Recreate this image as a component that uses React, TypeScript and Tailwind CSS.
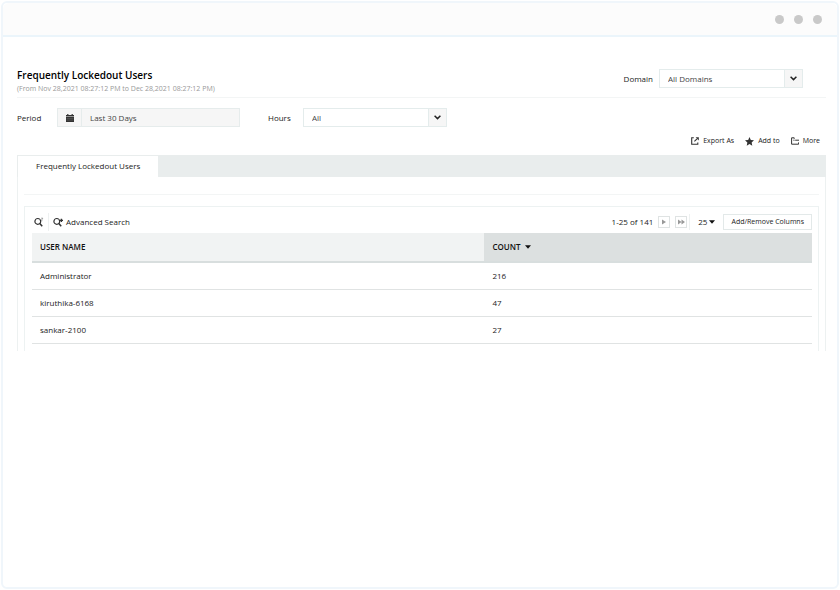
import type { ReactNode } from "react";

type User = { name: string; count: number };

const USERS: User[] = [
  { name: "Administrator", count: 216 },
  { name: "kiruthika-6168", count: 47 },
  { name: "sankar-2100", count: 27 },
];

function SelectBox({ id, value }: { id: string; value: string }) {
  return (
    <div className="relative w-36">
      <select
        id={id}
        defaultValue={value}
        className="block h-[19px] w-full appearance-none border border-[#e4ecec] bg-white pl-2 text-[8px] text-[#444] outline-none"
      >
        <option>{value}</option>
      </select>
      <span className="pointer-events-none absolute inset-y-0 right-0 flex w-[19px] items-center justify-center border border-[#e4ecec] bg-[#f6f6f6]">
        <svg width="7" height="5" viewBox="0 0 7 5" fill="none" stroke="#222" strokeWidth="1.5">
          <path d="M.6.8 3.5 3.6 6.4.8" />
        </svg>
      </span>
    </div>
  );
}

function ActionButton({ label, icon }: { label: string; icon: ReactNode }) {
  return (
    <button className="flex items-center gap-1 text-[7px] text-[#222]">
      {icon}
      {label}
    </button>
  );
}

function ExportIcon() {
  return (
    <svg width="8" height="8" viewBox="0 0 8 8" fill="none" stroke="#333" strokeWidth="1.1">
      <path d="M2.8.8H.7v6.5h6.1V5.6" />
      <path d="M3.4 4.4 6 1.9" />
      <path d="M4.6.3h3.2v3.2z" fill="#333" stroke="none" />
    </svg>
  );
}

function StarIcon() {
  return (
    <svg width="9" height="9" viewBox="0 0 24 24" fill="#333">
      <path d="m12 0 3.5 7.8 8.5 1-6.3 5.8 1.7 8.4L12 18.8 4.6 23l1.7-8.4L0 8.8l8.5-1z" />
    </svg>
  );
}

function MoreIcon() {
  return (
    <svg width="8" height="8" viewBox="0 0 8 8" fill="none" stroke="#333">
      <path d="M3.2.8H.6v6.4h7V5.4" />
      <path d="M2.4 3.2h1.1M4.2 3.2H8M3.2.8v1" />
    </svg>
  );
}

function SearchIcon({ advanced = false }: { advanced?: boolean }) {
  return (
    <svg width="10" height="10" viewBox="0 0 10 10" fill="none" stroke="#333">
      <circle cx="3.8" cy="4.4" r="2.9" strokeWidth="1.2" />
      <path d="m5.6 6.2 2.6 3" strokeWidth="1.5" />
      {advanced ? (
        <path d="M8.4 1.8v3.2M6.8 3.4H10" strokeWidth="1.4" />
      ) : (
        <path d="M7.2 1.2h1.6L7.8 2.8v1.4" stroke="#888" strokeWidth=".8" />
      )}
    </svg>
  );
}

function CaretDown() {
  return (
    <svg width="6" height="4" viewBox="0 0 6 4" fill="#111">
      <path d="M0 .2h6L3 3.8z" />
    </svg>
  );
}

export default function App() {
  return (
    <div className="flex min-h-screen bg-white p-px font-['Open_Sans',sans-serif] text-[#333]">
      <div className="flex-1 rounded-md border-2 border-[#f0f6fb] bg-white">
        <header className="flex h-[34px] items-center justify-end gap-[10px] rounded-t-md border-b-2 border-[#ebf5fb] bg-[#fcfcfc] pr-[15px]">
          <span className="size-[9px] rounded-full bg-[#c9c9c9]" />
          <span className="size-[9px] rounded-full bg-[#c9c9c9]" />
          <span className="size-[9px] rounded-full bg-[#c9c9c9]" />
        </header>

        <main className="pt-8 pr-[11px] pl-[14px]">
          <div className="flex items-start justify-between border-b border-[#f3f5f5] pr-[23px] pb-[2px]">
            <div>
              <h1 className="text-[10px] leading-3 font-semibold text-black">
                Frequently Lockedout Users
              </h1>
              <p className="pt-[2px] text-[7px] leading-3 text-[#999]">
                (From Nov 28,2021 08:27:12 PM to Dec 28,2021 08:27:12 PM)
              </p>
            </div>
            <div className="flex items-center gap-[6px]">
              <label htmlFor="domain" className="text-[8px] text-[#222]">
                Domain
              </label>
              <SelectBox id="domain" value="All Domains" />
            </div>
          </div>

          <div className="mt-[10px] flex items-center text-[#222]">
            <label htmlFor="period" className="w-10 text-[8px]">
              Period
            </label>
            <div className="flex h-[19px] w-[183px] border border-[#e6ecec] bg-[#f6f6f6]">
              <button
                aria-label="Choose dates"
                className="flex w-6 items-center justify-center border-r border-[#e6ecec]"
              >
                <svg width="8" height="8" viewBox="0 0 8 8" fill="#333">
                  <path d="M0 1h1.2V0h1.2v1h3.2V0h1.2v1H8v1.3H0zM0 2.8h8V8H0z" />
                  <path d="M.5 4.4h7M.5 6.1h7" stroke="#777" strokeWidth=".4" />
                </svg>
              </button>
              <input
                id="period"
                readOnly
                defaultValue="Last 30 Days"
                className="min-w-0 flex-1 px-2 text-[8px] text-[#444] outline-none"
              />
            </div>
            <label htmlFor="hours" className="ml-7 w-[35px] text-[8px]">
              Hours
            </label>
            <SelectBox id="hours" value="All" />
          </div>

          <div className="mt-2 flex h-3 items-center justify-end gap-[11px] pr-[6px]">
            <ActionButton label="Export As" icon={<ExportIcon />} />
            <ActionButton label="Add to" icon={<StarIcon />} />
            <ActionButton label="More" icon={<MoreIcon />} />
          </div>

          <div className="mt-2 flex h-[22px] bg-[#e9eded]">
            <button className="border border-b-0 border-[#e9eded] bg-white px-[18px] pb-[2px] text-[8px] text-[#222]">
              Frequently Lockedout Users
            </button>
          </div>

          <section className="border-x border-[#edf1f1] px-[6px] pt-[17px]">
            <hr className="border-[#f3f5f5]" />
            <div className="mt-[11px] border border-b-0 border-[#edf2f2] pr-[6px] pb-[7px] pl-[7px]">
              <div className="flex h-[26px] items-center justify-between pt-1 text-[8px] text-[#222]">
                <div className="flex items-center">
                  <button aria-label="Search" className="border-r border-[#eef1f1] py-1 pr-1 pl-[2px]">
                    <SearchIcon />
                  </button>
                  <button className="flex items-center gap-[3px] pl-1">
                    <SearchIcon advanced />
                    Advanced Search
                  </button>
                </div>
                <div className="flex items-center">
                  <span>1-25 of 141</span>
                  <button
                    aria-label="Next page"
                    className="ml-[5px] flex size-3 items-center justify-center border border-[#dfe3e3]"
                  >
                    <svg width="4" height="6" viewBox="0 0 4 6" fill="#999">
                      <path d="M0 .5 4 3 0 5.5z" />
                    </svg>
                  </button>
                  <button
                    aria-label="Last page"
                    className="ml-[5px] flex size-3 items-center justify-center border border-[#dfe3e3]"
                  >
                    <svg width="7" height="6" viewBox="0 0 7 6" fill="#999">
                      <path d="M0 .5 3.5 3 0 5.5zM3.5.5 7 3 3.5 5.5z" />
                    </svg>
                  </button>
                  <button className="ml-[2px] flex h-4 items-center gap-[2px] border-l border-[#eef1f1] pl-2">
                    25
                    <CaretDown />
                  </button>
                  <button className="ml-2 h-4 border border-[#e3e9e9] px-[7px] text-[7px]">
                    Add/Remove Columns
                  </button>
                </div>
              </div>

              <table className="w-full border-collapse text-left text-[8px] text-[#222]">
                <thead>
                  <tr className="h-[29px] border-b-2 border-[#d8dede] text-[#111]">
                    <th className="w-[58%] bg-[#f1f3f3] px-2 font-semibold">USER NAME</th>
                    <th className="bg-[#dce0e0] px-2 font-semibold">
                      <button className="flex items-center gap-[5px]">
                        COUNT
                        <CaretDown />
                      </button>
                    </th>
                  </tr>
                </thead>
                <tbody>
                  {USERS.map((user) => (
                    <tr key={user.name} className="h-[27px] border-b border-[#e0e3e3]">
                      <td className="px-2">{user.name}</td>
                      <td className="px-2">{user.count}</td>
                    </tr>
                  ))}
                </tbody>
              </table>
            </div>
          </section>
        </main>
      </div>
    </div>
  );
}
